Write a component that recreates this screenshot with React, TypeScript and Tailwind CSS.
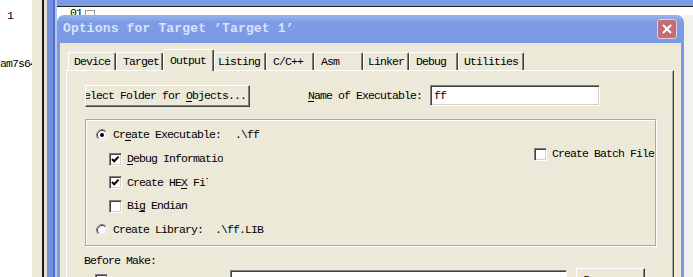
import React, { ReactElement } from 'react';

function CheckBox(props: { checked?: boolean }): ReactElement {
  return (
    <div className="relative w-[13px] h-[13px] shrink-0 bg-white border border-t-[#808080] border-l-[#808080] border-b-white border-r-white shadow-[inset_1px_1px_0_#404040,inset_-1px_-1px_0_#d4d0c8]">
      {props.checked && (
        <svg width="11" height="11" viewBox="0 0 11 11" className="absolute left-0 top-0">
          <path d="M2 5 L4.2 7.2 L8.6 2.6" stroke="#000" strokeWidth="2" fill="none" />
        </svg>
      )}
    </div>
  );
}

function Radio(props: { checked?: boolean }): ReactElement {
  return (
    <svg width="12" height="12" viewBox="0 0 12 12" className="shrink-0">
      <circle cx="6" cy="6" r="5" fill="#fff" />
      <path d="M2.11 9.89 A5.5 5.5 0 0 1 9.89 2.11" stroke="#808080" fill="none" />
      <path d="M9.89 2.11 A5.5 5.5 0 0 1 2.11 9.89" stroke="#fff" fill="none" />
      <path d="M2.82 9.18 A4.5 4.5 0 0 1 9.18 2.82" stroke="#404040" fill="none" />
      <path d="M9.18 2.82 A4.5 4.5 0 0 1 2.82 9.18" stroke="#d4d0c8" fill="none" />
      {props.checked && <circle cx="6" cy="6" r="2" fill="#000" />}
    </svg>
  );
}

function Tab(props: { label: string; className: string; selected?: boolean }): ReactElement {
  return (
    <div
      className={
        'flex items-center shrink-0 whitespace-nowrap border-t border-l border-white border-r border-r-[#404040] shadow-[inset_-1px_0_0_#808080] rounded-t-[2px] ' +
        (props.selected ? 'relative z-10 h-[22px] -mb-px bg-[#ece9d8] ' : 'h-[18px] ') +
        props.className
      }
    >
      {props.label}
    </div>
  );
}

function Dialog(): ReactElement {
  return (
    <div className="w-[627px] shrink-0 flex flex-col bg-white">
      <div className="h-[28px] shrink-0 rounded-t-[7px] bg-[linear-gradient(#9ab4ec,#7d9ce5_25%,#7b9ae4)] flex items-center pl-[6px] pr-[7px]">
        <span className="text-[13px] font-bold tracking-[0.15px] text-[#d9e3f8] whitespace-nowrap">
          Options for Target ’Target 1’
        </span>
        <div className="ml-auto w-[20px] h-[20px] rounded-[3px] bg-[#c46c78] border border-[#e6cdd1] flex items-center justify-center">
          <svg width="12" height="12" viewBox="0 0 12 12">
            <path d="M2 2 L10 10 M10 2 L2 10" stroke="#fff" strokeWidth="2" />
          </svg>
        </div>
      </div>

      <div className="flex-1 min-h-0 border-x-[3px] border-[#7b9ae4] bg-[#ece9d8] flex flex-col">
        <div className="flex items-end h-[21px] mt-[6px] ml-[8px]">
          <Tab label="Device" className="w-[48px] pl-[5px]" />
          <Tab label="Target" className="w-[47px] pl-[6px]" />
          <Tab label="Output" className="w-[51px] pl-[6px]" selected />
          <Tab label="Listing" className="w-[52px] pl-[3px]" />
          <Tab label="C/C++" className="w-[48px] pl-[6px]" />
          <Tab label="Asm" className="w-[49px] pl-[6px]" />
          <Tab label="Linker" className="w-[46px] pl-[4px]" />
          <Tab label="Debug" className="w-[49px] pl-[6px]" />
          <Tab label="Utilities" className="w-[66px] pl-[5px]" />
        </div>

        <div className="flex-1 ml-[6px] mr-[7px] border-t border-l border-white border-r border-r-[#404040] shadow-[inset_-1px_0_0_#aca899] pl-[18px] pt-[14px] flex flex-col">
          <div className="flex items-start h-[22px] shrink-0">
            <div className="w-[165px] h-[22px] shrink-0 overflow-hidden whitespace-nowrap flex items-center justify-end pr-[3px] border border-t-white border-l-white border-b-[#404040] border-r-[#404040] shadow-[inset_-1px_-1px_0_#808080]">
              <span>
                Select Folder for <span className="underline underline-offset-2">O</span>bjects...
              </span>
            </div>
            <div className="ml-[58px] h-[21px] flex items-center whitespace-nowrap">
              <span>
                <span className="underline underline-offset-2">N</span>ame of Executable:
              </span>
            </div>
            <div className="ml-[8px] w-[170px] h-[21px] bg-white flex items-center pl-[3px] border border-t-[#808080] border-l-[#808080] border-b-white border-r-white shadow-[inset_1px_1px_0_#404040,inset_-1px_-1px_0_#d4d0c8]">
              ff
            </div>
          </div>

          <div className="mt-[12px] w-[571px] h-[127px] shrink-0 border border-[#aca899] shadow-[inset_1px_1px_0_#fff,1px_1px_0_#fff] flex">
            <div className="w-[448px] pt-[3px] flex flex-col">
              <div className="h-[24px] flex items-center pl-[10px] whitespace-nowrap">
                <Radio checked />
                <span className="ml-[5px]">
                  Cr<span className="underline underline-offset-2">e</span>ate Executable:
                </span>
                <span className="ml-[14px]">.\ff</span>
              </div>
              <div className="h-[24px] flex items-center pl-[23px] whitespace-nowrap">
                <CheckBox checked />
                <span className="ml-[5px] w-[96px] overflow-hidden">
                  <span className="underline underline-offset-2">D</span>ebug Information
                </span>
              </div>
              <div className="h-[23px] flex items-center pl-[23px] whitespace-nowrap">
                <CheckBox checked />
                <span className="ml-[5px] w-[81px] overflow-hidden">
                  Create HE<span className="underline underline-offset-2">X</span> File
                </span>
              </div>
              <div className="h-[24px] flex items-center pl-[23px] whitespace-nowrap">
                <CheckBox />
                <span className="ml-[5px]">
                  Bi<span className="underline underline-offset-2">g</span> Endian
                </span>
              </div>
              <div className="h-[23px] flex items-center pl-[10px] whitespace-nowrap">
                <Radio />
                <span className="ml-[5px]">Create Library:</span>
                <span className="ml-[12px]">.\ff.LIB</span>
              </div>
            </div>
            <div className="pt-[22px]">
              <div className="h-[24px] flex items-center whitespace-nowrap">
                <CheckBox />
                <span className="ml-[5px]">Create Batch File</span>
              </div>
            </div>
          </div>

          <div className="mt-[7px] h-[16px] leading-[16px] -ml-px shrink-0">Before Make:</div>

          <div className="flex items-start h-[30px] shrink-0">
            <div className="ml-[10px] mt-[5px]">
              <CheckBox />
            </div>
            <div className="ml-[122px] mt-[1px] w-[337px] h-[20px] bg-white border border-t-[#808080] border-l-[#808080] border-b-white border-r-white shadow-[inset_1px_1px_0_#404040]" />
            <div className="ml-[9px] -mt-px w-[69px] h-[23px] flex items-center justify-center border border-t-white border-l-white border-b-[#404040] border-r-[#404040] shadow-[inset_-1px_-1px_0_#808080]">
              Browse...
            </div>
          </div>
        </div>
      </div>
    </div>
  );
}

export default function App(): ReactElement {
  return (
    <div className="flex w-[693px] h-[277px] overflow-hidden bg-white font-['Liberation_Mono',monospace] text-[11.5px] tracking-[-0.9px] text-black">
      <div className="w-[32px] shrink-0 bg-white overflow-hidden leading-[12px]">
        <div className="pl-[7px] pt-[10px]">1</div>
        <div className="mt-[36px] whitespace-nowrap">am7s64</div>
      </div>
      <div className="w-[10px] shrink-0 bg-[#ece9d8]" />
      <div className="w-[2px] shrink-0 bg-[#1a1a1a]" />
      <div className="w-[3px] shrink-0 bg-[#e4e1d4]" />
      <div className="w-[6px] shrink-0 bg-[#7390de]" />
      <div className="w-[2px] shrink-0 bg-[#5671c9]" />
      <div className="w-[2px] shrink-0 bg-[#b4c6ee]" />
      <div className="flex-1 flex flex-col min-w-0">
        <div className="h-[6px] shrink-0 bg-[#7b9be4]" />
        <div className="h-[1px] shrink-0 bg-[#222]" />
        <div className="h-[8px] shrink-0 bg-white overflow-hidden flex items-start pl-[13px] leading-[12px]">
          <span>01</span>
          <div className="ml-[3px] mt-[3px] w-[10px] h-[8px] border border-[#9a9a9a]" />
        </div>
        <div className="flex-1 flex min-h-0">
          <Dialog />
          <div className="flex-1 bg-[#f1f1ee]" />
        </div>
      </div>
    </div>
  );
}
